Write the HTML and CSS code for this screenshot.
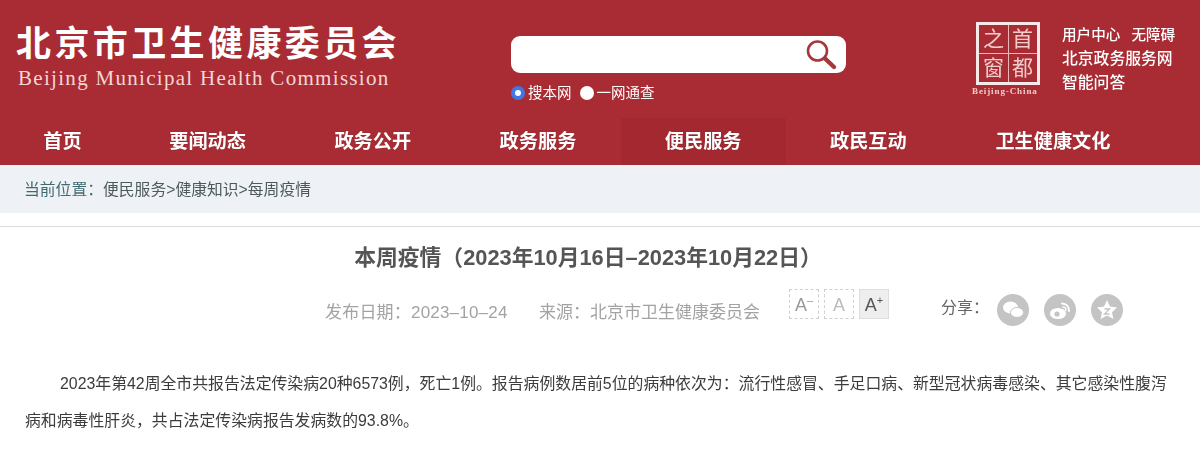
FILE: index.html
```html
<!DOCTYPE html>
<html lang="zh-CN">
    <head>
        <meta charset="UTF-8" />
        <meta name="viewport" content="width=device-width, initial-scale=1.0" />
        <title>本周疫情</title>
        <link rel="stylesheet" href="styles.css">
    </head>
    <body>
        <div class="page">
            <header class="header">
                <div class="top">
                    <div class="brand">
                        <div class="brand-cn">北京市卫生健康委员会</div>
                        <div class="brand-en">Beijing Municipal Health Commission</div>
                    </div>
                    <div class="search">
                        <div class="search-box">
                            <svg class="search-icon" width="34" height="34" viewBox="0 0 34 34">
                                <circle cx="13.5" cy="13" r="9.5" fill="none" stroke="#a5383c" stroke-width="2.6"/>
                                <path d="M21 20.5 L30 29" stroke="#a5383c" stroke-width="4.4" stroke-linecap="round"/>
                            </svg>
                        </div>
                        <div class="scope">
                            <span class="radio radio-on"></span><span class="scope-text">搜本网</span>
                            <span class="radio radio-off"></span><span>一网通查</span>
                        </div>
                    </div>
                    <div class="capital">
                        <div class="stamp">
                            <div class="stamp-box">
                                <span>之</span><span>首</span><span>窗</span><span>都</span>
                            </div>
                            <div class="stamp-en">Beijing-China</div>
                        </div>
                        <div class="quick">
                            <div class="quick-row quick-small"><span>用户中心</span><span>无障碍</span></div>
                            <div class="quick-row">北京政务服务网</div>
                            <div class="quick-row">智能问答</div>
                        </div>
                    </div>
                </div>
                <nav class="nav">
                    <a class="nav-item nav-home">首页</a>
                    <a class="nav-item">要闻动态</a>
                    <a class="nav-item">政务公开</a>
                    <a class="nav-item">政务服务</a>
                    <a class="nav-item nav-active">便民服务</a>
                    <a class="nav-item">政民互动</a>
                    <a class="nav-item nav-last">卫生健康文化</a>
                </nav>
            </header>

            <div class="crumbs"><span class="crumbs-label">当前位置：</span>便民服务&gt;健康知识&gt;每周疫情</div>

            <main class="article">
                <h1 class="article-title">本周疫情（2023年10月16日–2023年10月22日）</h1>
                <div class="meta">
                    <span class="meta-date">发布日期：2023–10–24</span>
                    <span class="meta-source">来源：北京市卫生健康委员会</span>
                    <div class="font-btns">
                        <span class="font-btn">A<sup>–</sup></span>
                        <span class="font-btn font-btn-mid">A</span>
                        <span class="font-btn font-btn-on">A<sup>+</sup></span>
                    </div>
                    <div class="share">
                        <span class="share-label">分享：</span>
                        <svg class="share-icon" width="32" height="32" viewBox="0 0 32 32">
                            <circle cx="16" cy="16" r="16" fill="#c4c4c4"/>
                            <ellipse cx="13.5" cy="13.5" rx="7.5" ry="6" fill="#fff"/>
                            <ellipse cx="20" cy="18.5" rx="6.5" ry="5" fill="#fff" stroke="#c4c4c4"/>
                        </svg>
                        <svg class="share-icon" width="32" height="32" viewBox="0 0 32 32">
                            <circle cx="16" cy="16" r="16" fill="#c4c4c4"/>
                            <ellipse cx="14" cy="19.5" rx="8" ry="5.5" fill="#fff"/>
                            <circle cx="13" cy="20" r="2.6" fill="#c4c4c4"/>
                            <path d="M18 9.5 A7 7 0 0 1 25 17" fill="none" stroke="#fff" stroke-width="1.8" stroke-linecap="round"/>
                            <path d="M19 13 A3.5 3.5 0 0 1 22 16.5" fill="none" stroke="#fff" stroke-width="1.4" stroke-linecap="round"/>
                        </svg>
                        <svg class="share-icon" width="32" height="32" viewBox="0 0 32 32">
                            <circle cx="16" cy="16" r="16" fill="#c4c4c4"/>
                            <path d="M16 6 L19 12.6 L26 13.4 L21 18.2 L22.4 25 L16 21.6 L9.6 25 L11 18.2 L6 13.4 L13 12.6 Z" fill="#fff"/>
                            <path d="M13.5 15 H18.5 L13.5 20 H18.5" fill="none" stroke="#c4c4c4" stroke-width="1.3"/>
                        </svg>
                    </div>
                </div>
                <p class="article-body">2023年第42周全市共报告法定传染病20种6573例，死亡1例。报告病例数居前5位的病种依次为：流行性感冒、手足口病、新型冠状病毒感染、其它感染性腹泻病和病毒性肝炎，共占法定传染病报告发病数的93.8%。</p>
            </main>
        </div>
    </body>
</html>
```

FILE: styles.css
```css
* {
    box-sizing: border-box;
}
html, body {
    margin: 0;
    padding: 0;
    background: #fff;
}
body {
    font-family: "Liberation Sans", "Noto Sans CJK SC", sans-serif;
    height: 454px;
    overflow: hidden;
}
.page {
    filter: blur(0.45px);
}

/* header */
.header {
    height: 165px;
    background: #a92c34;
    color: #fff;
}
.top {
    display: flex;
    height: 118px;
}
.brand {
    width: 511px;
    padding: 22px 0 0 16px;
}
.brand-cn {
    font-size: 35px;
    line-height: 44px;
    font-weight: 700;
    letter-spacing: 3.4px;
    white-space: nowrap;
}
.brand-en {
    font-family: "Liberation Serif", serif;
    font-size: 21px;
    line-height: 24px;
    letter-spacing: 1.3px;
    padding-left: 2px;
    color: #f3d6d4;
    white-space: nowrap;
}
.search {
    width: 465px;
    padding-top: 36px;
}
.search-box {
    width: 335px;
    height: 37px;
    background: #fff;
    border-radius: 9px;
    display: flex;
    justify-content: flex-end;
    align-items: center;
    padding-right: 8px;
}
.scope {
    display: flex;
    align-items: center;
    margin-top: 10px;
    font-size: 14.5px;
    line-height: 20px;
    color: #fff;
}
.radio {
    width: 14px;
    height: 14px;
    border-radius: 50%;
    background: #fff;
    margin-right: 3px;
}
.radio-on {
    background: #fff;
    border: 4px solid #3f78e0;
}
.scope-text {
    margin-right: 8px;
}
.capital {
    display: flex;
}
.stamp {
    width: 86px;
    padding-top: 22px;
}
.stamp-box {
    width: 64px;
    height: 63px;
    border: 3px solid #f7e9e8;
    display: grid;
    grid-template-columns: 1fr 1fr;
    grid-template-rows: 1fr 1fr;
    background:
        linear-gradient(#e9b9b8, #e9b9b8) center / 1px 100% no-repeat,
        linear-gradient(#e9b9b8, #e9b9b8) center / 100% 1px no-repeat;
    color: #f0cccb;
    font-size: 21px;
    line-height: 28px;
    text-align: center;
}
.stamp-en {
    font-family: "Liberation Serif", serif;
    font-size: 9px;
    font-weight: 700;
    line-height: 10px;
    margin-top: 1px;
    letter-spacing: 0.9px;
    white-space: nowrap;
    color: #f0cccb;
    margin-left: -4px;
}
.quick {
    padding-top: 23px;
    font-size: 15.8px;
    line-height: 24px;
    font-weight: 500;
    white-space: nowrap;
}
.quick-small {
    font-size: 14.6px;
}
.quick-row span + span {
    margin-left: 11px;
}

.nav {
    display: flex;
    height: 47px;
    font-size: 19.2px;
    font-weight: 700;
    text-shadow: 0 0 1px rgba(90, 20, 20, 0.5);
}
.nav-item {
    width: 165.2px;
    text-align: center;
    line-height: 47px;
}
.nav-home {
    width: 125px;
}
.nav-last {
    width: 204px;
}
.nav-active {
    background: #a3282f;
}

/* breadcrumb */
.crumbs {
    height: 48px;
    margin-bottom: 13px;
    padding-left: 24px;
    background: #eef1f5;
    font-size: 15.8px;
    line-height: 50px;
    color: #4d5a5c;
}
.crumbs-label {
    color: #3f6a70;
}

/* article */
.article {
    border-top: 1px solid #dcdcdc;
}
.article-title {
    margin: 16px 0 0;
    font-size: 21.8px;
    line-height: 30px;
    font-weight: 700;
    color: #555;
    text-align: center;
    padding-right: 24px;
}
.meta {
    display: flex;
    align-items: center;
    height: 40px;
    margin-top: 17px;
    padding-left: 325px;
    font-size: 17px;
    color: #a3a3a3;
}
.meta-date {
    width: 214px;
    letter-spacing: 0.2px;
}
.meta-source {
    width: 250px;
}
.font-btns {
    display: flex;
    gap: 5px;
    margin-bottom: 12px;
}
.font-btn {
    width: 30px;
    height: 30px;
    border: 1px dashed #cfcfcf;
    text-align: center;
    line-height: 30px;
    font-size: 18px;
    color: #999;
}
.font-btn sup {
    font-size: 11px;
    line-height: 0;
}
.font-btn-mid {
    color: #bbb;
}
.font-btn-on {
    border: 1px solid #ddd;
    background: #eee;
    color: #555;
}
.share {
    display: flex;
    align-items: center;
    margin-left: 52px;
}
.share-label {
    width: 56px;
    font-size: 16px;
    color: #666;
    margin-bottom: 8px;
}
.share-icon {
    margin-right: 15px;
}
.article-body {
    margin: 35px 0 0;
    padding: 0 28px 0 25px;
    font-size: 15.87px;
    line-height: 37px;
    text-indent: 35px;
    color: #3c3c3c;
}
```
